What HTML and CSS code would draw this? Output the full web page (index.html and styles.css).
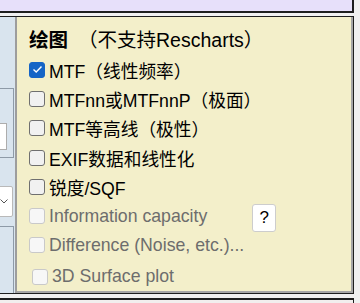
FILE: index.html
```html
<!DOCTYPE html>
<html lang="zh">
<head>
    <meta charset="UTF-8">
    <meta name="viewport" content="width=device-width, initial-scale=1.0">
    <title>绘图</title>
    <link rel="stylesheet" href="styles.css">
</head>
<body>
    <div class="topbar"></div>

    <div class="panel">
        <div class="side">
            <div class="frame frame-a">
                <div class="field"></div>
            </div>
            <div class="select">
                <svg width="8" height="5" viewBox="0 0 8 5"><path d="M0.5 0.5 L4 4 L7.5 0.5" fill="none" stroke="#555" stroke-width="1"/></svg>
            </div>
            <div class="frame frame-b"></div>
        </div>

        <div class="plots">
            <div class="title"><b>绘图</b><span class="note">（不支持Rescharts）</span></div>

            <label class="opt">
                <span class="box checked"><svg width="11" height="9" viewBox="0 0 11 9"><path d="M1.5 4.5 L4.2 7 L9.5 1.5" fill="none" stroke="#fff" stroke-width="1.4"/></svg></span>
                MTF（线性频率）
            </label>
            <label class="opt"><span class="box"></span>MTFnn或MTFnnP（极面）</label>
            <label class="opt"><span class="box"></span>MTF等高线（极性）</label>
            <label class="opt"><span class="box"></span>EXIF数据和线性化</label>
            <label class="opt"><span class="box"></span>锐度/SQF</label>

            <!-- not available in this mode -->
            <label class="opt off"><span class="box"></span>Information capacity<span class="help">?</span></label>
            <label class="opt off"><span class="box"></span>Difference (Noise, etc.)...</label>
            <label class="opt off surface"><span class="box"></span>3D Surface plot</label>
        </div>
    </div>

    <div class="footer"></div>
</body>
</html>
```

FILE: styles.css
```css
body {
    margin: 0;
    background-color: #f0f0f0;
    font-family: "Liberation Sans", "Noto Sans CJK SC", sans-serif;
    color: #000;
    height: 303px;
    overflow: hidden;
}

.topbar {
    width: 352px;
    height: 11px;
    background-color: #e7e0fa;
    border-right: 2px solid #1e1e1e;
    border-bottom: 2px solid #1e1e1e;
    margin-bottom: 3px;
}

.panel {
    display: flex;
    width: 354px;
    height: 278px;
    box-sizing: border-box;
    border-top: 1px solid #1e1e1e;
    border-right: 1px solid #1e1e1e;
    border-bottom: 1px solid #1e1e1e;
}

.side {
    width: 15px;
    flex-shrink: 0;
    background-color: #d9e4ee;
    border-right: 2px solid #9d9d9d;
    overflow: hidden;
}

.frame {
    margin-left: -20px;
    width: 34px;
    box-sizing: border-box;
    border: 1px solid #8e9aa7;
}
.frame-a {
    margin-top: 71px;
    height: 70px;
    padding-top: 34px;
}
.frame-b {
    margin-top: 9px;
    height: 90px;
}

.field {
    width: 26px;
    height: 27px;
    box-sizing: border-box;
    background-color: #fff;
    border: 1px solid #adadad;
}

.select {
    margin-top: 28px;
    margin-left: -20px;
    width: 33px;
    height: 31px;
    box-sizing: border-box;
    background-color: #fff;
    border: 1px solid #b9b9b9;
    border-radius: 2px;
    display: flex;
    align-items: center;
    justify-content: flex-end;
    padding-right: 4px;
}

.plots {
    flex: 1;
    background-color: #f3efca;
    border-right: 2px solid #a6a6a6;
    border-bottom: 2px solid #a6a6a6;
    padding-left: 12px;
    overflow: hidden;
}

.title {
    padding-top: 11px;
    height: 24px;
    line-height: 24px;
    font-size: 19.5px;
    margin-bottom: 3px;
    white-space: nowrap;
}
.title b {
    margin-right: 10px;
}

.opt {
    display: flex;
    align-items: center;
    height: 29.3px;
    font-size: 17.7px;
    white-space: nowrap;
}

.box {
    width: 16px;
    height: 16px;
    box-sizing: border-box;
    border: 1px solid #6f6f6f;
    border-radius: 3px;
    background-color: #f1f1f1;
    margin-right: 4px;
    flex-shrink: 0;
    display: flex;
    align-items: center;
    justify-content: center;
}
.box.checked {
    background-color: #1565c6;
    border-color: #1565c6;
}

.off {
    color: #6d6d6d;
}
.off .box {
    border-color: #c9c9c9;
    background-color: #f7f7f7;
}

.surface {
    margin-top: 2px;
    padding-left: 3px;
}

.help {
    margin-left: 45px;
    margin-top: 4px;
    width: 24px;
    height: 28px;
    box-sizing: border-box;
    background-color: #fff;
    border: 1px solid #cdcdcd;
    border-radius: 3px;
    color: #000;
    font-size: 17px;
    display: flex;
    align-items: center;
    justify-content: center;
}

.footer {
    margin-top: 4px;
    width: 353px;
    height: 3px;
    background-color: #f2eeee;
    border-top: 2px solid #1e1e1e;
    border-right: 1px solid #1e1e1e;
}
```
